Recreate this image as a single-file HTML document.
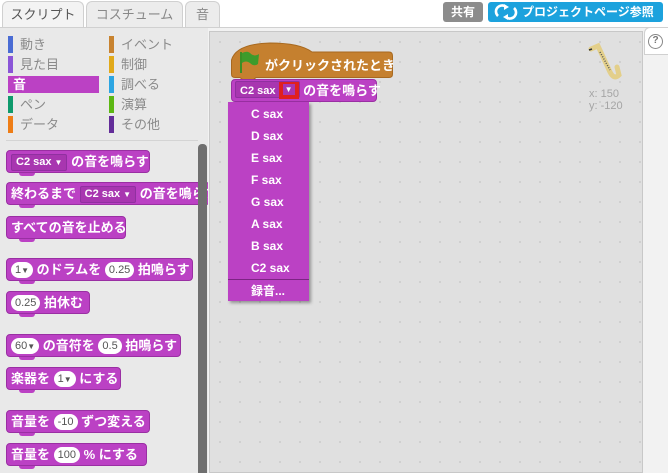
<!DOCTYPE html>
<html><head><meta charset="utf-8"><style>
*{margin:0;padding:0;box-sizing:border-box}
body{width:668px;height:473px;overflow:hidden;background:#fff;position:relative;font-family:"Liberation Sans","Noto Sans CJK JP",sans-serif}
.a{position:absolute}
.tab{position:absolute;top:1px;height:27px;border:1px solid #d0d0d0;border-bottom:none;border-radius:6px 6px 0 0;background:#ececec;color:#888;font-size:13px;line-height:25px;text-align:center}
.cat{position:absolute;height:17px;width:90px;font-size:13px;color:#8a8a8a;line-height:17px;white-space:nowrap}
.cat i{position:absolute;left:0;top:0;width:5px;height:17px}
.cat span{position:absolute;left:12px;white-space:nowrap}
.blk{position:absolute;height:23px;background:#bb41c4;border:1px solid #9a2fa3;border-radius:4px;color:#fff;font-size:13px;font-weight:bold;line-height:21px;padding-left:4px;white-space:nowrap}
.blk:after{content:"";position:absolute;left:12px;bottom:-4px;width:16px;height:3px;background:#bb41c4;border-radius:0 0 4px 4px}
.dd{display:inline-block;background:#a836b0;border:1px solid #9030a0;height:17px;line-height:15px;padding:0 4px;font-size:11px;vertical-align:1px;border-radius:2px}
.num{display:inline-block;background:#fff;color:#555;border-radius:9px;height:16px;line-height:16px;padding:0 4px;font-size:11px;font-weight:normal;vertical-align:1px}
.tri{font-size:8px}
.menu div{height:22px;line-height:22px;padding-left:23px;color:#fff;font-size:12px;font-weight:bold}
</style></head><body>
<div class="tab" style="left:2px;width:82px;background:#f3f3f3;color:#555;height:28px">スクリプト</div>
<div class="tab" style="left:86px;width:97px">コスチューム</div>
<div class="tab" style="left:185px;width:35px">音</div>
<div class="a" style="left:443px;top:2px;width:40px;height:20px;background:#8c8c8c;border-radius:3px;color:#fff;font-size:12px;font-weight:bold;text-align:center;line-height:20px">共有</div>
<div class="a" style="left:488px;top:2px;width:175px;height:20px;background:#1ca2dd;border-radius:3px;color:#fff;font-size:12px;font-weight:bold;line-height:20px;padding-left:34px">プロジェクトページ参照</div>
<svg class="a" style="left:494px;top:4px" width="24" height="16" viewBox="0 0 24 16"><path d="M4 12 A6 6 0 0 1 12 3 M20 4 A6 6 0 0 1 12 13" stroke="#fff" stroke-width="2.6" fill="none"/><path d="M10 0 L15 3 L10 6Z M14 10 L9 13 L14 16Z" fill="#fff"/></svg>
<div class="a" style="left:0;top:27px;width:209px;height:446px;background:#e9e9e9;border-top:1px solid #d0d0d0"></div>
<div class="cat" style="left:8px;top:36px"><i style="background:#4a6cd4"></i><span>動き</span></div>
<div class="cat" style="left:8px;top:56px"><i style="background:#8a55d7"></i><span>見た目</span></div>
<div class="a" style="left:8px;top:76px;width:91px;height:17px;background:#bb41c4;color:#fff;font-size:13px;font-weight:bold;line-height:17px;padding-left:5px">音</div>
<div class="cat" style="left:8px;top:96px"><i style="background:#0e9a6c"></i><span>ペン</span></div>
<div class="cat" style="left:8px;top:116px"><i style="background:#ee7d16"></i><span>データ</span></div>
<div class="cat" style="left:109px;top:36px"><i style="background:#c88330"></i><span>イベント</span></div>
<div class="cat" style="left:109px;top:56px"><i style="background:#e1a91a"></i><span>制御</span></div>
<div class="cat" style="left:109px;top:76px"><i style="background:#2ca5e2"></i><span>調べる</span></div>
<div class="cat" style="left:109px;top:96px"><i style="background:#5cb712"></i><span>演算</span></div>
<div class="cat" style="left:109px;top:116px"><i style="background:#632d99"></i><span>その他</span></div>
<div class="a" style="left:6px;top:140px;width:192px;height:1px;background:#d4d4d4"></div>
<div class="blk" style="left:6px;top:150px;width:144px"><span class="dd">C2 sax <span class="tri">▼</span></span> の音を鳴らす</div>
<div class="blk" style="left:6px;top:182px;width:204px;border-right:none">終わるまで <span class="dd">C2 sax <span class="tri">▼</span></span> の音を鳴らす</div>
<div class="blk" style="left:6px;top:216px;width:120px">すべての音を止める</div>
<div class="blk" style="left:6px;top:258px;width:187px"><span class="num">1<span class="tri">▼</span></span> のドラムを <span class="num">0.25</span> 拍鳴らす</div>
<div class="blk" style="left:6px;top:291px;width:84px"><span class="num">0.25</span> 拍休む</div>
<div class="blk" style="left:6px;top:334px;width:175px"><span class="num">60<span class="tri">▼</span></span> の音符を <span class="num">0.5</span> 拍鳴らす</div>
<div class="blk" style="left:6px;top:367px;width:115px">楽器を <span class="num">1<span class="tri">▼</span></span> にする</div>
<div class="blk" style="left:6px;top:410px;width:144px">音量を <span class="num">-10</span> ずつ変える</div>
<div class="blk" style="left:6px;top:443px;width:141px">音量を <span class="num">100</span> % にする</div>
<div class="a" style="left:198px;top:144px;width:9px;height:329px;background:#6f6f6f;border-radius:4px 4px 0 0"></div>
<div class="a" style="left:208px;top:27px;width:460px;height:446px;background:#f2f2f2;border-top:1px solid #d0d0d0"></div>
<div class="a" style="left:209px;top:31px;width:434px;height:442px;background-color:#e0e0e0;background-image:radial-gradient(#cfcfcf 1px,transparent 1.2px);background-size:20px 20px;border:1px solid #c8c8c8"></div>
<div class="a" style="left:644px;top:27px;width:24px;height:28px;background:#fff;border:1px solid #d0d0d0;border-right:none;border-radius:6px 0 0 0"></div>
<div class="a" style="left:648px;top:34px;width:15px;height:15px;border:1.5px solid #888;border-radius:50%;color:#777;font-size:10px;font-weight:bold;text-align:center;line-height:12px">?</div>
<svg class="a" style="left:588px;top:42px" width="36" height="42" viewBox="0 0 36 42"><path d="M3 7 L10 4 L22 30 Q26 38 31 33 L29 25" stroke="#e3cf8a" stroke-width="5" fill="none" stroke-linecap="round"/><path d="M12 10 L22 28" stroke="#555" stroke-width="1.5" stroke-dasharray="1 1.5"/><path d="M1 8 L4 7" stroke="#333" stroke-width="1.5"/></svg>
<div class="a" style="left:589px;top:88px;color:#a5a5a5;font-size:11px;line-height:12px">x: 150<br>y: -120</div>
<svg class="a" style="left:230px;top:40px" width="164" height="40" viewBox="0 0 164 40"><path d="M1.5 20 Q6 4 40 3 Q70 3 82 12 L159 12 Q162.5 12 162.5 16 L162.5 34 Q162.5 37.5 159 37.5 L26 37.5 L23 40 L13 40 L10 37.5 L5 37.5 Q1.5 37.5 1.5 34 Z" fill="#c5802f" stroke="#a8691f"/></svg>
<svg class="a" style="left:238px;top:50px" width="22" height="24" viewBox="0 0 22 24"><path d="M3 2 L3 23" stroke="#3b8f25" stroke-width="2"/><path d="M4 3 Q10 0 13 4 Q17 7 21 4 L20 14 Q16 17 12 13 Q8 10 4 13Z" fill="#3d9b2b"/></svg>
<div class="a" style="left:265px;top:55px;color:#fff;font-size:13px;font-weight:bold">がクリックされたとき</div>
<div class="blk" style="left:231px;top:79px;width:146px;padding-left:3px"><span class="dd" style="padding-right:0">C2 sax <span style="display:inline-block;width:20px;height:17px;background:#e0201f;vertical-align:-5px;position:relative"><span style="position:absolute;left:4px;top:2px;width:12px;height:11px;background:#a836b0;font-size:8px;text-align:center;line-height:11px">▼</span></span></span> の音を鳴らす</div>
<div class="a menu" style="left:228px;top:102px;width:81px;height:199px;background:#bb41c4;box-shadow:2px 2px 3px rgba(0,0,0,.35);padding-top:1px">
<div>C sax</div><div>D sax</div><div>E sax</div><div>F sax</div><div>G sax</div><div>A sax</div><div>B sax</div><div>C2 sax</div>
<div style="border-top:1px solid #7d2384;height:23px">録音...</div></div>
</body></html>
